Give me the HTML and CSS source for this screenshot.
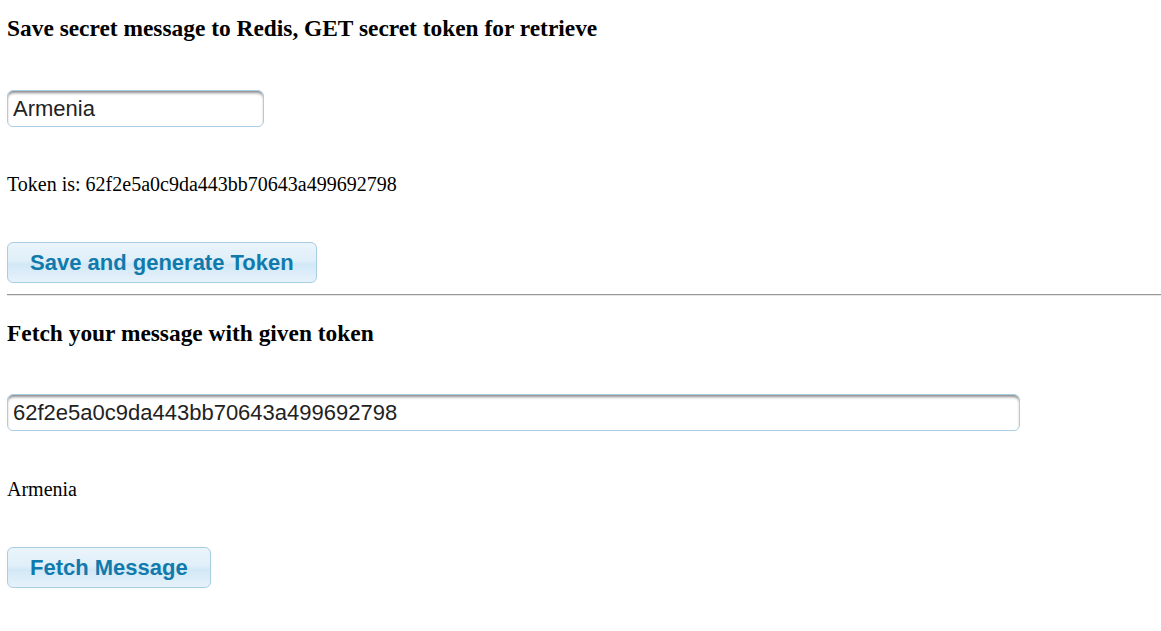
FILE: index.html
```html
<!DOCTYPE html>
<html>
<head>
<meta charset="utf-8">
<title>Secret message</title>
<link rel="stylesheet" href="styles.css">
</head>
<body>
<div class="page">
  <h3 class="title">Save secret message to Redis, GET secret token for retrieve</h3>
  <input class="field field-short field-first" type="text" value="Armenia">
  <p class="text">Token is: 62f2e5a0c9da443bb70643a499692798</p>
  <button class="btn">Save and generate Token</button>
  <hr class="rule">
  <h3 class="title title-second">Fetch your message with given token</h3>
  <input class="field field-long" type="text" value="62f2e5a0c9da443bb70643a499692798">
  <p class="text text-second">Armenia</p>
  <button class="btn">Fetch Message</button>
</div>
</body>
</html>
```
FILE: styles.css
```css
html, body {
  margin: 0;
  padding: 0;
  background: #fff;
}
body {
  padding-left: 7px;
  font-family: "Liberation Serif", "Times New Roman", serif;
  color: #000;
}
.page {
  display: flex;
  flex-direction: column;
  align-items: flex-start;
  padding-top: 17px;
}
.title {
  margin: 0;
  font-size: 23.4px;
  line-height: 22px;
  font-weight: bold;
}
.title-second {
  margin-top: 26px;
}
.field {
  margin: 50px 0 0;
  box-sizing: border-box;
  height: 37px;
  border: 1px solid #a9cde2;
  border-radius: 6px;
  box-shadow: inset 0 3px 3px -1px #8a8a8a;
  padding: 0 5px;
  font-family: "Liberation Sans", Arial, sans-serif;
  font-size: 22px;
  color: #222;
  background: #fff;
  outline: none;
}
.field-first {
  margin-top: 51px;
}
.field-short { width: 257px; }
.field-long { width: 1013px; }
.text {
  margin: 48px 0 0;
  font-size: 20px;
  line-height: 18px;
}
.text-second {
  margin-top: 49px;
}
.btn {
  margin-top: 49px;
  box-sizing: border-box;
  height: 41px;
  padding: 0 22px;
  border: 1px solid #a9cde2;
  border-radius: 6px;
  background: linear-gradient(to bottom, #eaf4fb 0%, #e0eff9 45%, #d2e8f6 55%, #e6f2fb 100%);
  font-family: "Liberation Sans", Arial, sans-serif;
  font-weight: bold;
  font-size: 22px;
  color: #117aad;
  cursor: pointer;
}
.rule {
  align-self: stretch;
  margin: 11px 0 0;
  height: 0;
  border: 0;
  border-top: 1px solid #999;
  border-bottom: 1px solid #e6e6e6;
}
```
